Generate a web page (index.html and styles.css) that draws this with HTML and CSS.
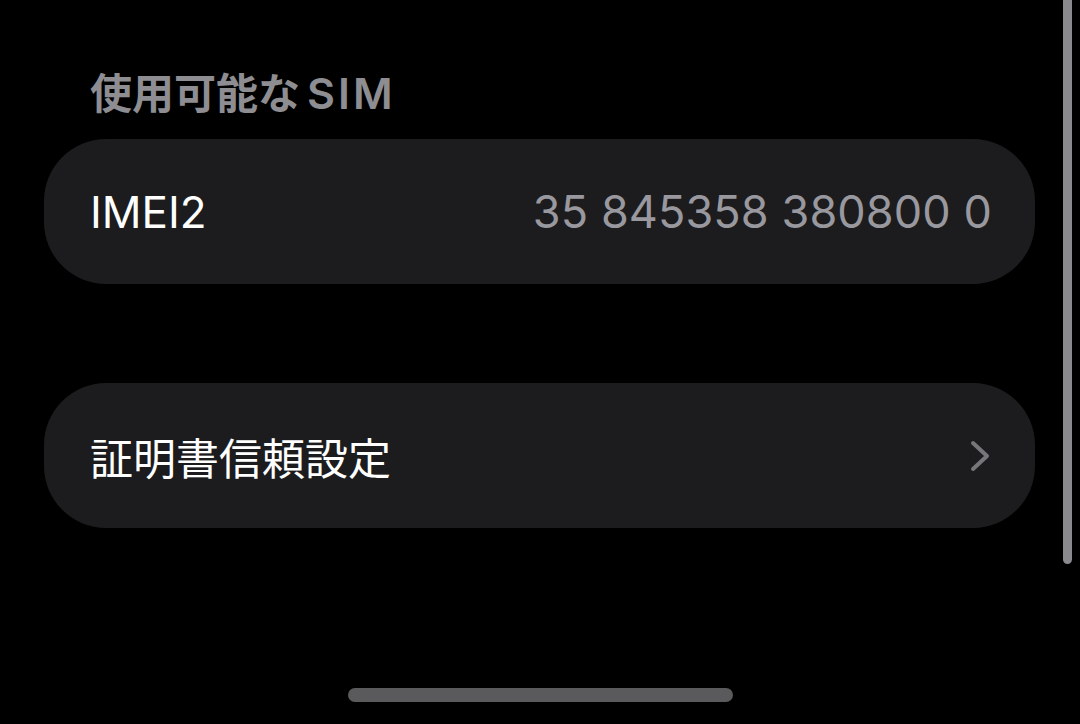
FILE: index.html
```html
<!DOCTYPE html>
<html lang="ja">
<head>
    <meta charset="UTF-8">
    <meta name="viewport" content="width=device-width, initial-scale=1.0">
    <title>端末情報</title>
    <link rel="stylesheet" href="styles.css">
</head>
<body>
    <div class="screen">
        <div class="content">
            <h2 class="section-title">使用可能な<span class="latin">SIM</span></h2>

            <div class="row-card">
                <span class="row-label">IMEI2</span>
                <span class="row-value">35 845358 380800 0</span>
            </div>

            <div class="row-card row-link">
                <span class="row-label jp">証明書信頼設定</span>
                <svg class="chevron" viewBox="0 0 20 32" width="20" height="32">
                    <path d="M3 3 L17 16 L3 29" fill="none" stroke="#76767b" stroke-width="4" stroke-linecap="round" stroke-linejoin="round"/>
                </svg>
            </div>
        </div>

        <div class="scrollbar"></div>
        <div class="home-indicator"></div>
    </div>
</body>
</html>
```

FILE: styles.css
```css
* {
    margin: 0;
    padding: 0;
    box-sizing: border-box;
    font-family: Inter, "Noto Sans CJK JP", sans-serif;
}

body {
    background: #000;
    color: #fff;
    width: 1080px;
    height: 724px;
    overflow: hidden;
}

.screen {
    position: relative;
    width: 1080px;
    height: 724px;
}

.content {
    padding: 65px 45px 0 44px;
}

.section-title {
    font-size: 42px;
    font-weight: 600;
    line-height: 56px;
    color: #8d8d92;
    padding-left: 46px;
    margin-bottom: 17px;
}

.section-title .latin {
    margin-left: 7px;
    font-size: 43px;
    letter-spacing: 3px;
}

.row-card {
    display: flex;
    align-items: center;
    justify-content: space-between;
    height: 145px;
    background: #1c1c1e;
    border-radius: 62px;
    padding: 0 43px 0 46px;
    margin-bottom: 99px;
}

.row-label {
    font-size: 44px;
    color: #fff;
}

.row-label.jp {
    font-size: 43px;
}

.row-value {
    font-size: 45px;
    letter-spacing: 0.1px;
    color: #98989e;
}

.row-link {
    padding-right: 45px;
}

.scrollbar {
    position: absolute;
    top: 0;
    left: 1063px;
    width: 9px;
    height: 564px;
    background: #8a8a8e;
    border-radius: 0 0 5px 5px;
}

.home-indicator {
    position: absolute;
    left: 348px;
    top: 688px;
    width: 385px;
    height: 14px;
    background: #5a5a5c;
    border-radius: 7px;
}
```
